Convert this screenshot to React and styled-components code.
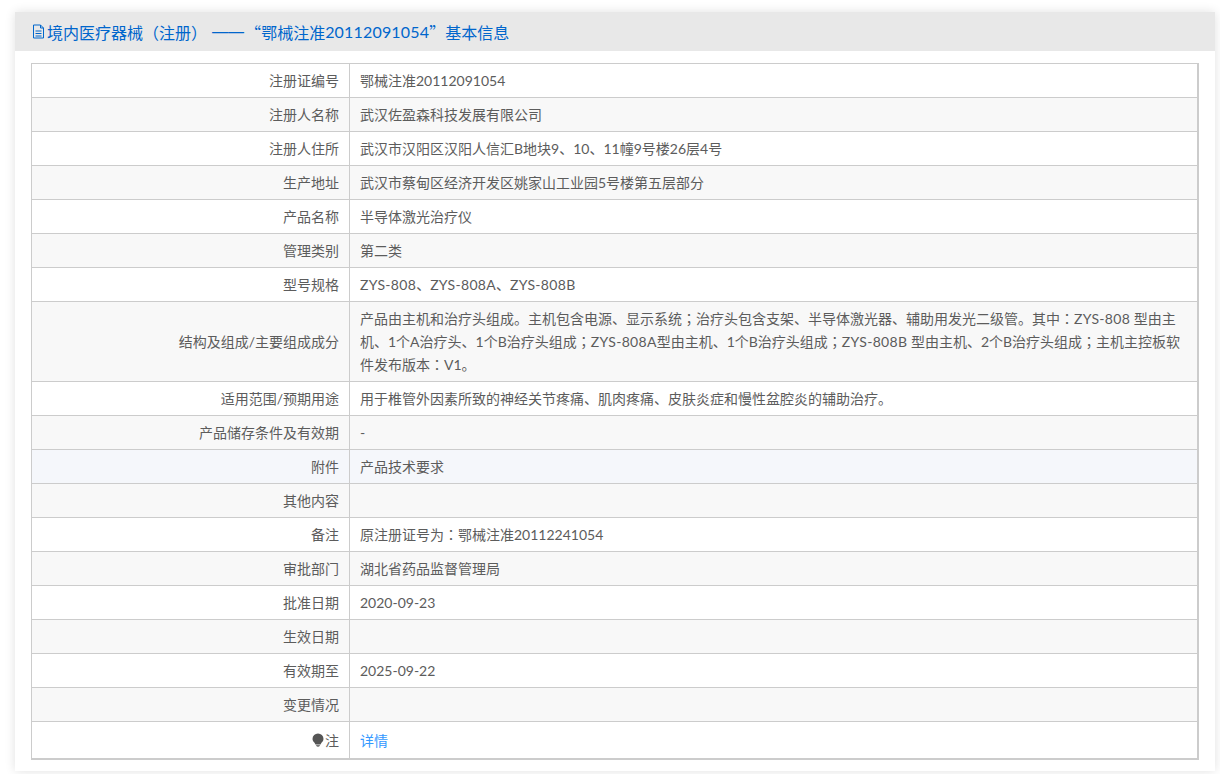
import React from 'react';
import styled, { createGlobalStyle } from 'styled-components';

const GlobalStyle = createGlobalStyle`
  html, body {
    margin: 0;
    background: #fff;
  }
  body {
    font-family: Lato, "Noto Sans CJK SC", sans-serif;
    font-size: 14px;
    color: #5c5c5c;
  }
`;

const Page = styled.div`
  width: 1220px;
  height: 774px;
  box-sizing: border-box;
  padding: 12px 5px 3px 15px;
  overflow: hidden;
`;

const Panel = styled.section`
  background: #fff;
  box-shadow: 0 0 10px rgba(0, 0, 0, 0.12);
  height: 759px;
`;

const Heading = styled.h3`
  display: flex;
  align-items: center;
  margin: 0;
  height: 39px;
  padding-left: 17px;
  background: #e8e8e8;
  font-size: 16px;
  font-weight: normal;
  color: #0066cc;
  white-space: pre;
`;

const Dash = styled.span`
  font-family: "Liberation Sans", sans-serif;
  margin: 0 1px;
`;

const Quote = styled.span`
  font-family: "Noto Sans CJK SC", sans-serif;
`;

const Number = styled.span`
  letter-spacing: 0.18px;
`;

const Body = styled.div`
  padding: 12px 16px 0;
`;

const Table = styled.table`
  width: 1168px;
  border-collapse: collapse;
  table-layout: fixed;
  border: 1px solid #ccc;
  border-right-width: 2px;
  border-bottom-width: 2px;
`;

const Row = styled.tr`
  background: ${p => (p.$tint === 'blue' ? '#f5f7fb' : p.$tint === 'grey' ? '#f8f8f8' : '#fff')};
`;

const Label = styled.th`
  box-sizing: border-box;
  height: 34px;
  padding: 0 10px;
  border: 1px solid #ccc;
  text-align: right;
  font-weight: normal;
  line-height: 23px;
`;

const Value = styled.td`
  padding: ${p => (p.$last ? '7px 10px 6px' : '5px 10px')};
  border: 1px solid #ccc;
  line-height: 23px;
`;

const Link = styled.a`
  color: #3399ff;
  text-decoration: none;
`;

// semicolon and colon sit centred in their em box in the reference
const Punct = styled.span`
  font-family: "Noto Sans CJK TC", sans-serif;
`;

const Model = styled.span`
  letter-spacing: 0.3px;
`;

const DocIcon = () => (
  <svg width="13" height="15" viewBox="0 0 13 15" fill="none" stroke="#0066cc" strokeWidth="1" style={{ flex: 'none', marginRight: 2 }}>
    <path d="M1.5 1h7l3 3v10h-10z" />
    <path d="M8.5 1v3h3M3.5 7h6M3.5 9.5h6M3.5 12h6" />
  </svg>
);

const BulbIcon = () => (
  <svg width="12" height="14" viewBox="0 0 12 14" style={{ verticalAlign: '-1px', marginRight: 1 }}>
    <path d="M6 .5A5.5 5.5 0 0 1 11.5 6c0 2-1.5 3-2.3 4.2-.4.6-.5 1-.6 1.3H3.400c-.1-.3-.2-.7-.6-1.300C2 9 .5 8 .5 6A5.500 5.500 0 0 1 6 .5z" fill="#555" />
    <path d="M3.800 12h4.400L7 13.700H5z" fill="#777" />
  </svg>
);

const formatValue = text =>
  text.split(/([\uFF1B\uFF1A]|ZYS-808[AB]?)/).map((part, i) => {
    if (i % 2 === 0) return part;
    return part.startsWith('ZYS') ? <Model key={i}>{part}</Model> : <Punct key={i}>{part}</Punct>;
  });

const rows = [
  ['注册证编号', '鄂械注准20112091054'],
  ['注册人名称', '武汉佐盈森科技发展有限公司'],
  ['注册人住所', '武汉市汉阳区汉阳人信汇B地块9、10、11幢9号楼26层4号'],
  ['生产地址', '武汉市蔡甸区经济开发区姚家山工业园5号楼第五层部分'],
  ['产品名称', '半导体激光治疗仪'],
  ['管理类别', '第二类'],
  ['型号规格', 'ZYS-808、ZYS-808A、ZYS-808B'],
  ['结构及组成/主要组成成分', '产品由主机和治疗头组成。主机包含电源、显示系统\uFF1B治疗头包含支架、半导体激光器、辅助用发光二级管。其中\uFF1AZYS-808 型由主机、1个A治疗头、1个B治疗头组成\uFF1BZYS-808A型由主机、1个B治疗头组成\uFF1BZYS-808B 型由主机、2个B治疗头组成\uFF1B主机主控板软件发布版本\uFF1AV1。'],
  ['适用范围/预期用途', '用于椎管外因素所致的神经关节疼痛、肌肉疼痛、皮肤炎症和慢性盆腔炎的辅助治疗。'],
  ['产品储存条件及有效期', '-'],
  ['附件', '产品技术要求', 'blue'],
  ['其他内容', ''],
  ['备注', '原注册证号为\uFF1A鄂械注准20112241054'],
  ['审批部门', '湖北省药品监督管理局'],
  ['批准日期', '2020-09-23'],
  ['生效日期', ''],
  ['有效期至', '2025-09-22'],
  ['变更情况', ''],
];

export default function App() {
  return (
    <Page>
      <GlobalStyle />
      <Panel>
        <Heading>
          <DocIcon />
          {'境内医疗器械\uFF08注册\uFF09 '}
          <Dash>——</Dash>
          {' '}
          <Quote>{'\u201C'}</Quote>
          鄂械注准<Number>20112091054</Number>
          <Quote>{'\u201D'}</Quote>
          基本信息
        </Heading>
        <Body>
          <Table>
            <colgroup>
              <col style={{ width: 318 }} />
              <col />
            </colgroup>
            <tbody>
              {rows.map(([label, value, tint], i) => (
                <Row key={label} $tint={tint || (i % 2 ? 'grey' : '')}>
                  <Label>{label}</Label>
                  <Value>{formatValue(value)}</Value>
                </Row>
              ))}
              <Row>
                <Label><BulbIcon />注</Label>
                <Value $last><Link href="#">详情</Link></Value>
              </Row>
            </tbody>
          </Table>
        </Body>
      </Panel>
    </Page>
  );
}
